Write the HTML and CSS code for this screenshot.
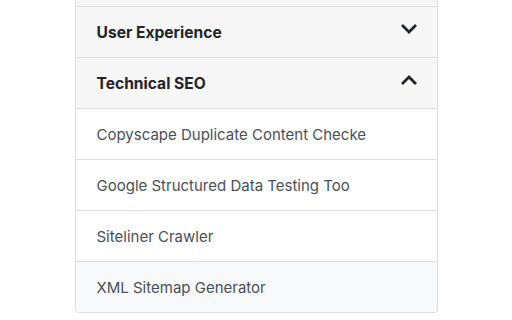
FILE: index.html
```html
<!DOCTYPE html>
<html lang="en">
<head>
    <meta charset="UTF-8">
    <title>SEO Tools</title>
    <link rel="stylesheet" href="styles.css">
</head>
<body>
    <div class="accordion">
        <!-- previous section, scrolled out of view -->
        <div class="card-header prev"></div>
        <div class="card-header">
            <span>User Experience</span>
            <svg class="chevron" viewBox="0 0 16 16" width="16" height="16">
                <polyline points="2,5 8,11 14,5" />
            </svg>
        </div>
        <div class="card-header">
            <span>Technical SEO</span>
            <svg class="chevron" viewBox="0 0 16 16" width="16" height="16">
                <polyline points="2,11 8,5 14,11" />
            </svg>
        </div>
        <ul class="list-group">
            <li class="list-item">Copyscape Duplicate Content Checke</li>
            <li class="list-item">Google Structured Data Testing Too</li>
            <li class="list-item">Siteliner Crawler</li>
            <li class="list-item hover">XML Sitemap Generator</li>
        </ul>
    </div>
</body>
</html>
```

FILE: styles.css
```css
body {
    margin: 0;
    font-family: Inter, "Liberation Sans", sans-serif;
    background-color: #ffffff;
    color: #212529;
}

.accordion {
    width: 361px;
    margin: 0 auto;
    border: 1px solid #dfdfdf;
    border-top: none;
    border-radius: 0 0 4px 4px;
    overflow: hidden;
}

.card-header {
    display: flex;
    justify-content: space-between;
    align-items: center;
    padding: 14px 20px 12px 21px;
    line-height: 24px;
    font-size: 15.6px;
    font-weight: bold;
    background-color: #f7f7f7;
    border-bottom: 1px solid #dfdfdf;
}

.card-header.prev {
    height: 6px;
    padding: 0;
}

.chevron {
    fill: none;
    stroke: #212529;
    stroke-width: 2.8;
    stroke-linecap: square;
    margin-top: -8px;
}

.list-group {
    list-style: none;
    margin: 0;
    padding: 0;
}

.list-item {
    padding: 14px 20px 12px 21px;
    line-height: 24px;
    font-size: 15px;
    color: #495057;
    white-space: nowrap;
    overflow: hidden;
    border-bottom: 1px solid #dfdfdf;
}

.list-item:last-child {
    border-bottom: none;
}

.list-item.hover {
    background-color: #f8f9fa;
}
```
